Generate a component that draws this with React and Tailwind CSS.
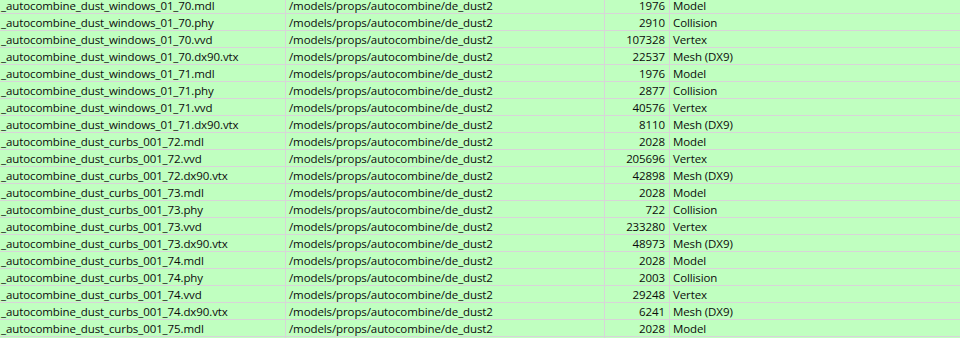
const rows = [
  ["_autocombine_dust_windows_01_70.mdl", "1976", "Model"],
  ["_autocombine_dust_windows_01_70.phy", "2910", "Collision"],
  ["_autocombine_dust_windows_01_70.vvd", "107328", "Vertex"],
  ["_autocombine_dust_windows_01_70.dx90.vtx", "22537", "Mesh (DX9)"],
  ["_autocombine_dust_windows_01_71.mdl", "1976", "Model"],
  ["_autocombine_dust_windows_01_71.phy", "2877", "Collision"],
  ["_autocombine_dust_windows_01_71.vvd", "40576", "Vertex"],
  ["_autocombine_dust_windows_01_71.dx90.vtx", "8110", "Mesh (DX9)"],
  ["_autocombine_dust_curbs_001_72.mdl", "2028", "Model"],
  ["_autocombine_dust_curbs_001_72.vvd", "205696", "Vertex"],
  ["_autocombine_dust_curbs_001_72.dx90.vtx", "42898", "Mesh (DX9)"],
  ["_autocombine_dust_curbs_001_73.mdl", "2028", "Model"],
  ["_autocombine_dust_curbs_001_73.phy", "722", "Collision"],
  ["_autocombine_dust_curbs_001_73.vvd", "233280", "Vertex"],
  ["_autocombine_dust_curbs_001_73.dx90.vtx", "48973", "Mesh (DX9)"],
  ["_autocombine_dust_curbs_001_74.mdl", "2028", "Model"],
  ["_autocombine_dust_curbs_001_74.phy", "2003", "Collision"],
  ["_autocombine_dust_curbs_001_74.vvd", "29248", "Vertex"],
  ["_autocombine_dust_curbs_001_74.dx90.vtx", "6241", "Mesh (DX9)"],
  ["_autocombine_dust_curbs_001_75.mdl", "2028", "Model"],
  ["", "", ""],
];

// one list-view row: name | path | size | type
function Row({ name, size, kind }) {
  return (
    <div className="grid grid-cols-[286px_319px_65px_1fr] h-[17px] border-b border-[#d8d4d8]">
      <div className="border-r border-[#d8d4d8] pl-px pt-px leading-[15px] whitespace-nowrap overflow-hidden">
        {name}
      </div>
      <div className="border-r border-[#d8d4d8] pl-[3px] pt-px leading-[15px] whitespace-nowrap overflow-hidden">
        {name ? "/models/props/autocombine/de_dust2" : ""}
      </div>
      <div className="border-r border-[#d8d4d8] pr-[4px] pt-px text-right leading-[15px]">
        {size}
      </div>
      <div className="pl-[3px] pt-px leading-[15px] whitespace-nowrap overflow-hidden">{kind}</div>
    </div>
  );
}

export default function App() {
  return (
    <div className="h-[338px] w-[960px] overflow-hidden bg-[#c0ffc0] text-[11.5px] tracking-[-0.1px] text-[#0c0c0c] font-['Open_Sans',sans-serif]">
      <div className="-mt-[3px]">
        {rows.map((r, i) => (
          <Row key={i} name={r[0]} size={r[1]} kind={r[2]} />
        ))}
      </div>
    </div>
  );
}
